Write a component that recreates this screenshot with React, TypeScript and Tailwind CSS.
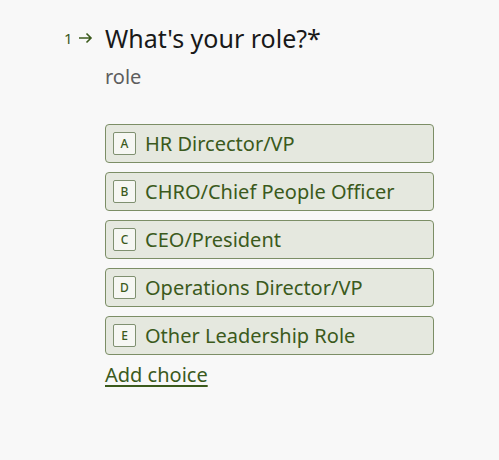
import React from "react";

const options = [
  { k: "A", t: "HR Dircector/VP" },
  { k: "B", t: "CHRO/Chief People Officer" },
  { k: "C", t: "CEO/President" },
  { k: "D", t: "Operations Director/VP" },
  { k: "E", t: "Other Leadership Role" },
];

export default function App() {
  return (
    <div
      className="w-[499px] h-[460px] bg-[#f8f8f8] overflow-hidden"
      style={{ fontFamily: '"Noto Sans", "Open Sans", sans-serif' }}
    >
      <div className="flex pt-[23px] pl-[64px]">
        <div className="w-[41px] flex items-center h-[30px] text-[#3b5a1c] text-[15px] gap-[5px]">
          <span>1</span>
          <svg width="15" height="14" viewBox="0 0 15 14" fill="none" stroke="#3b5a1c" strokeWidth="1.6">
            <path d="M1 7h12M8.5 2.5L13 7l-4.5 4.5" />
          </svg>
        </div>
        <div className="flex flex-col">
          <div className="text-[25px] leading-[30px] text-[#191919]">What's your role?*</div>
          <div className="text-[20px] leading-[26px] text-[#5e5e5e] mt-[11px]">role</div>
          <div className="flex flex-col gap-[9px] mt-[34px] w-[329px]">
            {options.map((o) => (
              <div
                key={o.k}
                className="h-[39px] rounded-[4px] border border-[#7c8e66] bg-[#e5e8df] flex items-center pl-[7px]"
              >
                <div className="w-[23px] h-[23px] border border-[#7f9070] bg-[#f6f7f3] rounded-[2px] flex items-center justify-center text-[12px] font-medium text-[#3b5a1c]">
                  {o.k}
                </div>
                <span className="ml-[9px] text-[20px] text-[#3b5a1c]">{o.t}</span>
              </div>
            ))}
          </div>
          <div className="mt-[7px] text-[20px] leading-[26px] text-[#3b5a1c] underline underline-offset-[3px]">
            Add choice
          </div>
        </div>
      </div>
    </div>
  );
}
